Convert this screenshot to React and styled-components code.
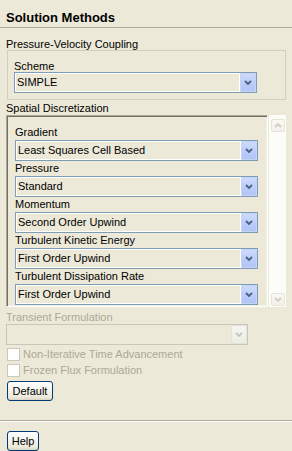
import React from "react";
import styled, { createGlobalStyle } from "styled-components";

const GlobalStyle = createGlobalStyle`
  html, body { margin: 0; padding: 0; background: #ece9d8; }
  body {
    font-family: "Liberation Sans", Arial, sans-serif;
    font-size: 11px;
    color: #000;
    width: 292px;
    height: 451px;
    overflow: hidden;
  }
`;

const Page = styled.div`
  display: flex;
  flex-direction: column;
  width: 292px;
  height: 451px;
  box-sizing: border-box;
`;

const Title = styled.div`
  padding: 10px 0 0 6px;
  height: 17px;
  line-height: 16px;
  font-size: 13px;
  font-weight: bold;
  border-bottom: 1px solid #aca899;
`;

const SectionLabel = styled.div`
  margin-top: ${(p) => p.$top}px;
  padding-left: 6px;
  height: ${(p) => p.$h}px;
  line-height: ${(p) => p.$h}px;
  color: ${(p) => (p.$disabled ? "#aca899" : "#000")};
`;

const GroupBox = styled.div`
  margin: 0 6px 0 7px;
  border: 1px solid #d0d0bf;
  padding: 9px 28px 6px 6px;
`;

const FieldLabel = styled.div`
  height: ${(p) => p.$h}px;
  line-height: ${(p) => p.$h}px;
`;

const ScrollArea = styled.div`
  display: flex;
  margin-left: 6px;
  height: 192px;
`;

const Pane = styled.div`
  width: 262px;
  box-sizing: border-box;
  border: 1px solid;
  border-color: #aca899 #fff #fff #aca899;
  box-shadow: inset 1px 1px #716f64, inset -1px -1px #f1efe2;
  padding: 9px 8px 0 8px;
  overflow: hidden;
`;

const Scrollbar = styled.div`
  margin-left: 1px;
  width: 17px;
  background: #fcfcf9;
  display: flex;
  flex-direction: column;
  justify-content: space-between;
  align-items: center;
  padding: 4px 0 1px 0;
  box-sizing: border-box;
`;

const ScrollButton = styled.div`
  width: 14px;
  height: 13px;
  box-sizing: border-box;
  border: 1px solid #e6e4da;
  border-radius: 2px;
  background: linear-gradient(180deg, #f9f9f6 0%, #f1f0ea 100%);
  display: flex;
  align-items: center;
  justify-content: center;
`;

const Combo = styled.div`
  display: flex;
  height: 21px;
  width: ${(p) => p.$w}px;
  margin-left: ${(p) => p.$ml || 0}px;
  box-sizing: border-box;
  border: 1px solid ${(p) => (p.$disabled ? "#c9c7ba" : "#7f9db9")};
  background: #ece9d8;
`;

const ComboValue = styled.div`
  flex: 1;
  border: 1px solid ${(p) => (p.$disabled ? "#ece9d8" : "#fff")};
  padding-left: 1px;
  line-height: 17px;
  white-space: nowrap;
  overflow: hidden;
`;

const DropButton = styled.div`
  width: 16px;
  box-sizing: border-box;
  border-radius: 2px;
  display: flex;
  align-items: center;
  justify-content: center;
  border: 1px solid ${(p) => (p.$disabled ? "#e4e2d6" : "#c3d2f5")};
  background: ${(p) =>
    p.$disabled
      ? "linear-gradient(180deg, #f6f5f0 0%, #eeede5 100%)"
      : "linear-gradient(180deg, #cddafc 0%, #b9cbf7 60%, #b1c5f6 100%)"};
`;

const CheckRow = styled.div`
  display: flex;
  align-items: center;
  height: 16px;
  padding-left: 7px;
  gap: 3px;
  color: #aca899;
  margin-top: ${(p) => p.$top || 0}px;
`;

const CheckBox = styled.div`
  width: 13px;
  height: 13px;
  box-sizing: border-box;
  border: 1px solid #cac8bb;
  background: #fff;
`;

const Button = styled.button`
  margin-left: 7px;
  margin-top: ${(p) => p.$top}px;
  width: ${(p) => p.$w}px;
  height: 20px;
  padding: 0;
  font-family: "Liberation Sans", Arial, sans-serif;
  font-size: 11px;
  color: #000;
  border: 1px solid #003c74;
  border-radius: 3px;
  background: linear-gradient(180deg, #ffffff 0%, #f5f4ef 45%, #ece9d8 85%, #d8d2c6 100%);
  line-height: 18px;
  text-align: center;
  align-self: flex-start;
`;

const Separator = styled.div`
  margin-top: 19px;
  border-top: 1px solid #aca899;
  border-bottom: 1px solid #fff;
`;

const Chevron = ({ color, up }) => (
  <svg width="8" height="5" viewBox="0 0 8 5">
    <polyline
      points={up ? "1,4 4,1 7,4" : "1,1 4,4 7,1"}
      fill="none"
      stroke={color}
      strokeWidth="1.8"
    />
  </svg>
);

const Select = ({ value, w, ml, disabled }) => (
  <Combo $w={w} $ml={ml} $disabled={disabled}>
    <ComboValue $disabled={disabled}>{value}</ComboValue>
    <DropButton $disabled={disabled}>
      <Chevron color={disabled ? "#c9c7ba" : "#4d6185"} />
    </DropButton>
  </Combo>
);

const fields = [
  ["Gradient", "Least Squares Cell Based"],
  ["Pressure", "Standard"],
  ["Momentum", "Second Order Upwind"],
  ["Turbulent Kinetic Energy", "First Order Upwind"],
  ["Turbulent Dissipation Rate", "First Order Upwind"],
];

export default function App() {
  return (
    <>
      <GlobalStyle />
      <Page>
        <Title>Solution Methods</Title>
        <SectionLabel $top={10} $h={12}>Pressure-Velocity Coupling</SectionLabel>
        <GroupBox>
          <FieldLabel $h={12}>Scheme</FieldLabel>
          <Select value="SIMPLE" w={243} />
        </GroupBox>
        <SectionLabel $top={2} $h={13}>Spatial Discretization</SectionLabel>
        <ScrollArea>
          <Pane>
            {fields.map(([label, value]) => (
              <React.Fragment key={label}>
                <FieldLabel $h={15}>{label}</FieldLabel>
                <Select value={value} w={243} />
              </React.Fragment>
            ))}
          </Pane>
          <Scrollbar>
            <ScrollButton>
              <Chevron color="#cfcdc1" up />
            </ScrollButton>
            <ScrollButton>
              <Chevron color="#cfcdc1" />
            </ScrollButton>
          </Scrollbar>
        </ScrollArea>
        <SectionLabel $top={4} $h={13} $disabled>Transient Formulation</SectionLabel>
        <Select value="" w={242} ml={6} disabled />
        <CheckRow $top={1}>
          <CheckBox />
          Non-Iterative Time Advancement
        </CheckRow>
        <CheckRow>
          <CheckBox />
          Frozen Flux Formulation
        </CheckRow>
        <Button $top={3} $w={46}>Default</Button>
        <Separator />
        <Button $top={9} $w={32}>Help</Button>
      </Page>
    </>
  );
}
